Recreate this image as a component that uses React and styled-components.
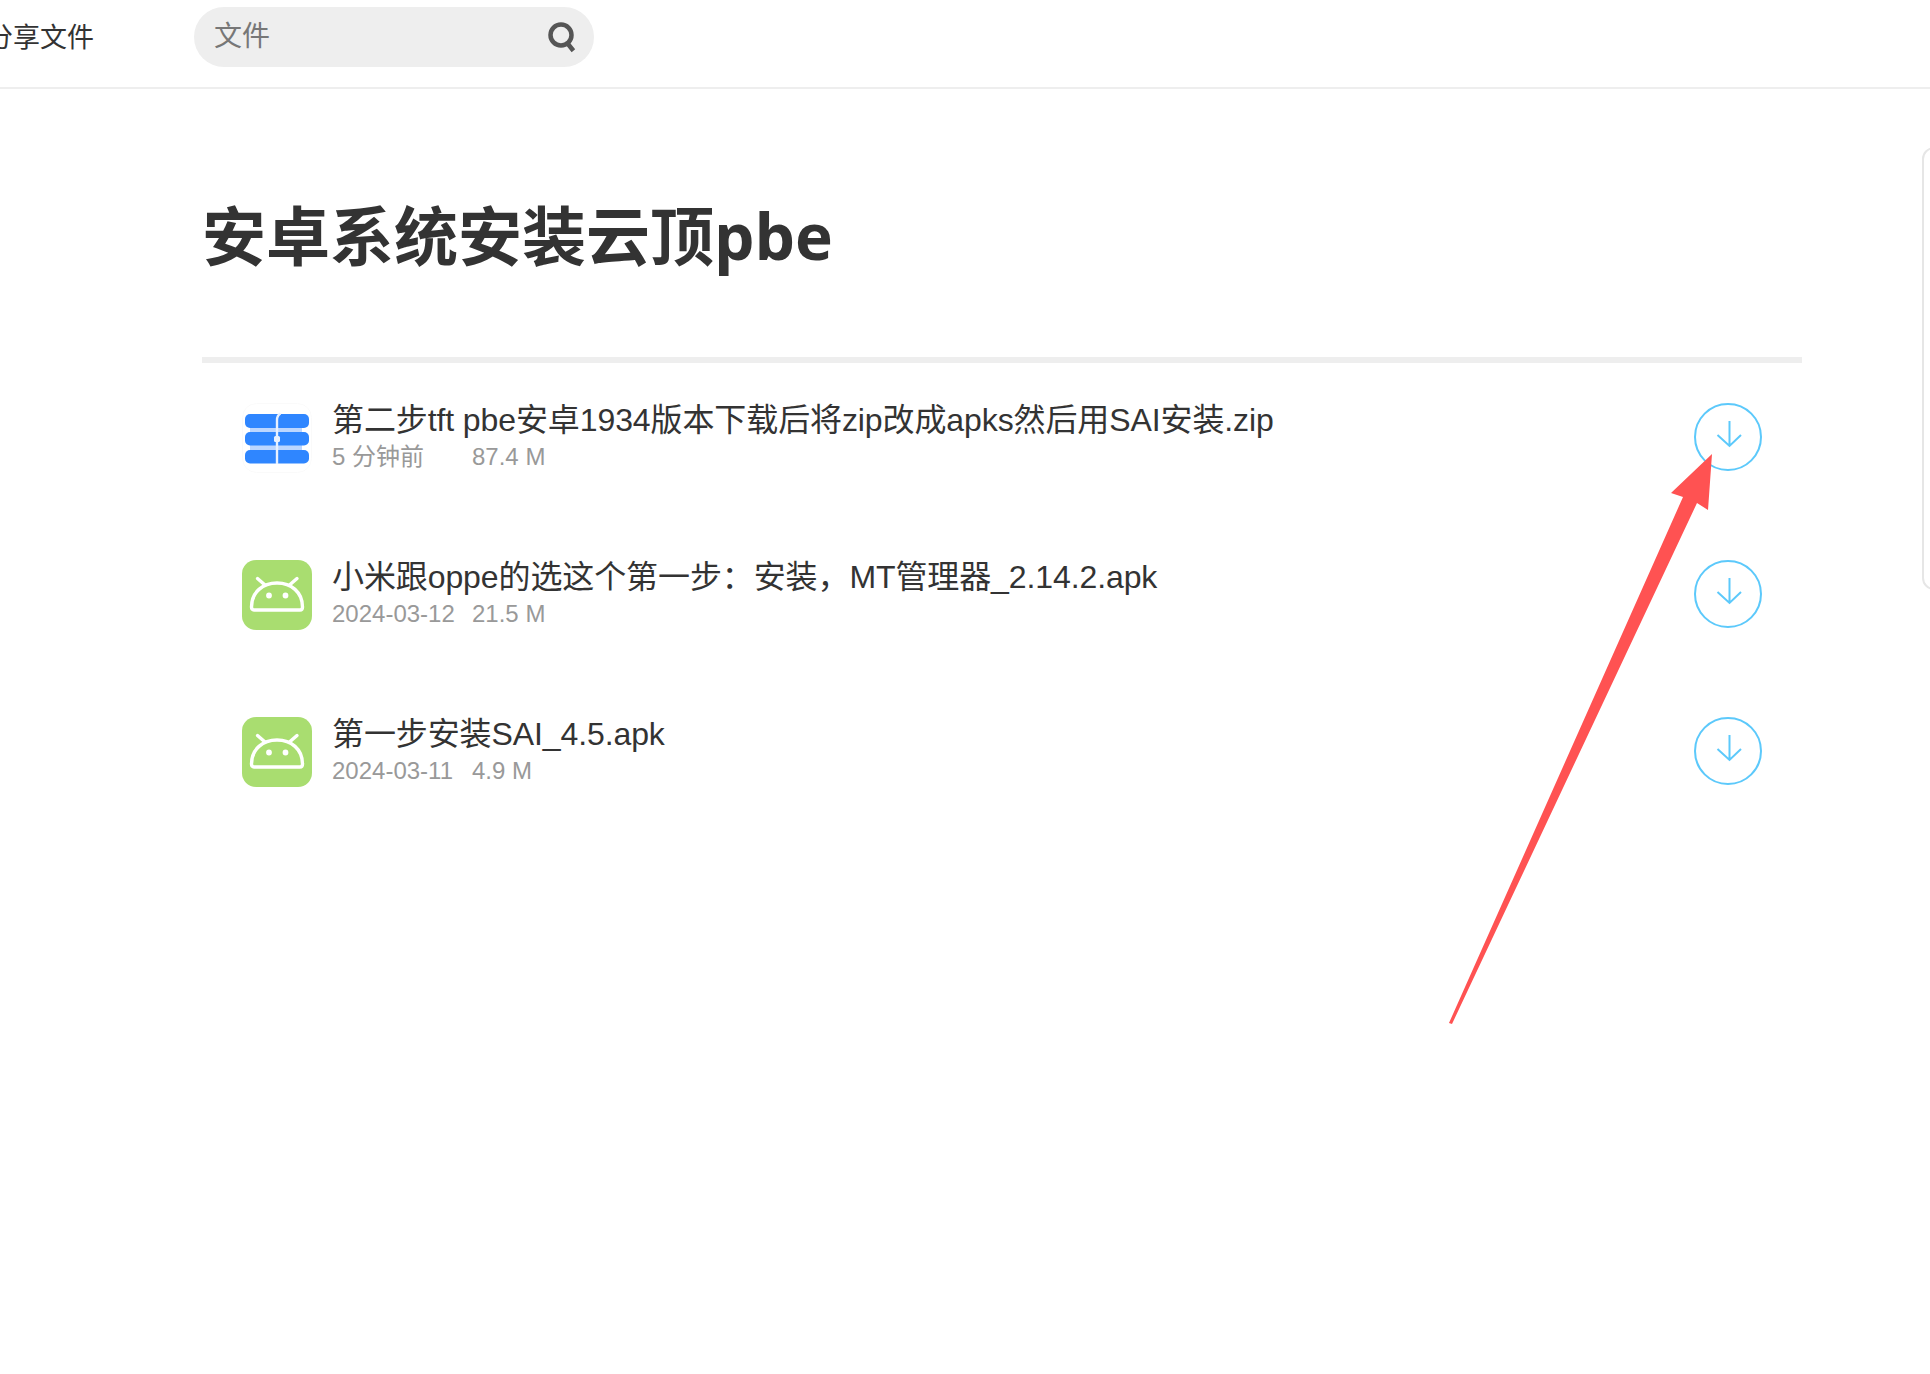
import React from "react";
import styled, { createGlobalStyle } from "styled-components";

const Global = createGlobalStyle`
  html, body { margin: 0; padding: 0; background: #fff; }
  body { font-family: "Liberation Sans", "Noto Sans CJK SC", sans-serif; }
  * { box-sizing: border-box; }
`;

const Page = styled.div`
  position: relative;
  width: 1930px;
  height: 1374px;
  overflow: hidden;
  background: #fff;
`;

const TopBar = styled.header`
  display: flex;
  align-items: flex-start;
  height: 89px;
  padding-top: 7px;
  border-bottom: 2px solid #eeeeee;
`;

const NavLabel = styled.div`
  width: 194px;
  margin-left: -14px;
  padding-top: 12px;
  font-size: 27px;
  line-height: 38px;
  color: #333;
  white-space: nowrap;
`;

const SearchBox = styled.div`
  display: flex;
  align-items: center;
  justify-content: space-between;
  width: 400px;
  height: 60px;
  margin-left: 14px;
  padding: 0 16px 0 20px;
  border-radius: 30px;
  background: #eeeeee;
`;

const SearchText = styled.span`
  font-size: 28px;
  line-height: 56px;
  color: #777;
`;

const Main = styled.main`
  width: 1600px;
  margin-left: 202px;
`;

const Title = styled.h1`
  margin: 0;
  height: 274px;
  padding-top: 102px;
  border-bottom: 6px solid #eeeeee;
  font-family: "Open Sans", "Noto Sans CJK SC", sans-serif;
  font-size: 64px;
  line-height: 90px;
  font-weight: 700;
  color: #333;
`;

const FileList = styled.ul`
  list-style: none;
  margin: 0;
  padding: 10px 40px 0 40px;
  display: flex;
  flex-direction: column;
  gap: 30px;
`;

const Row = styled.li`
  display: flex;
  align-items: center;
  height: 127px;
`;

const IconBox = styled.div`
  width: 70px;
  height: 70px;
  flex: none;
  margin-top: 2px;
  border-radius: 14px;
  overflow: hidden;
  background: ${(p) => p.$bg};
`;

const Info = styled.div`
  flex: 1;
  margin-left: 20px;
  padding-top: 2px;
`;

const FileName = styled.div`
  font-size: 32px;
  line-height: 38px;
  letter-spacing: -0.1px;
  color: #333;
  white-space: nowrap;
`;

const Meta = styled.div`
  display: flex;
  padding-top: 1px;
  font-size: 24px;
  line-height: 34px;
  color: #999;
`;

const MetaDate = styled.span`
  min-width: ${(p) => p.$w}px;
`;

const DownloadButton = styled.button`
  display: flex;
  align-items: center;
  justify-content: center;
  width: 68px;
  height: 68px;
  padding: 0 0 6px 2px;
  flex: none;
  border: 2px solid #5cc9fb;
  border-radius: 50%;
  background: transparent;
`;

const SidePanel = styled.div`
  position: absolute;
  left: 1922px;
  top: 147px;
  width: 40px;
  height: 443px;
  border: 2px solid #e6e6e6;
  border-radius: 12px;
`;

const ArrowOverlay = styled.svg`
  position: absolute;
  left: 0;
  top: 0;
  pointer-events: none;
`;

const ZipIcon = () => (
  <svg width="70" height="70" viewBox="0 0 70 70">
    <rect x="0.5" y="0.5" width="69" height="69" rx="14" fill="#fff" stroke="#fafafa" />
    <rect x="8" y="24" width="52" height="6" fill="#bcd6ff" />
    <rect x="8" y="41" width="52" height="7" fill="#bcd6ff" />
    <rect x="3" y="11" width="64" height="14" rx="5" fill="#2f86ff" />
    <rect x="3" y="29" width="64" height="13.5" rx="5" fill="#2f86ff" />
    <rect x="3" y="47" width="64" height="13.5" rx="5" fill="#2f86ff" />
    <path d="M38.5 10.5 Q35 12.5 35 17 V61" stroke="#e8f1ff" strokeWidth="2.4" fill="none" />
    <rect x="32" y="33" width="6" height="6" rx="1.5" fill="#e8f1ff" />
  </svg>
);

const AndroidIcon = () => (
  <svg width="70" height="70" viewBox="0 0 70 70" fill="none" stroke="#fff" strokeWidth="3.4" strokeLinecap="round" strokeLinejoin="round">
    <path d="M9.5 47 C9.5 32 21 23 35 23 C49 23 60.5 32 60.5 47 Q60.5 50 58 50 H12 Q9.5 50 9.5 47 Z" />
    <path d="M15.5 18.5 L23 25 M55 18.5 L47.5 25" />
    <circle cx="27" cy="35.5" r="1.2" fill="#fff" />
    <circle cx="43.5" cy="35.5" r="1.2" fill="#fff" />
  </svg>
);

const SearchGlyph = () => (
  <svg width="32" height="34" viewBox="0 0 32 34" fill="none" stroke="#555" strokeWidth="4.5" strokeLinecap="square">
    <circle cx="15" cy="15" r="10.5" />
    <path d="M22 24 L26 29" />
  </svg>
);

const DownArrow = () => (
  <svg width="26" height="28" viewBox="0 0 26 28" fill="none" stroke="#5cc9fb" strokeWidth="2">
    <path d="M13.5 1 V26 M1.5 15 L13.5 26 L25 15" />
  </svg>
);

const files = [
  { name: "第二步tft pbe安卓1934版本下载后将zip改成apks然后用SAI安装.zip", date: "5 分钟前", size: "87.4 M", kind: "zip" },
  { name: "小米跟oppe的选这个第一步：安装，MT管理器_2.14.2.apk", date: "2024-03-12", size: "21.5 M", kind: "apk" },
  { name: "第一步安装SAI_4.5.apk", date: "2024-03-11", size: "4.9 M", kind: "apk" },
];

export default function App() {
  return (
    <Page>
      <Global />
      <TopBar>
        <NavLabel>分享文件</NavLabel>
        <SearchBox>
          <SearchText>文件</SearchText>
          <SearchGlyph />
        </SearchBox>
      </TopBar>
      <Main>
        <Title>安卓系统安装云顶pbe</Title>
        <FileList>
          {files.map((f) => (
            <Row key={f.name}>
              <IconBox $bg={f.kind === "zip" ? "#fff" : "#a9dd70"}>
                {f.kind === "zip" ? <ZipIcon /> : <AndroidIcon />}
              </IconBox>
              <Info>
                <FileName>{f.name}</FileName>
                <Meta>
                  <MetaDate $w={140}>{f.date}</MetaDate>
                  <span>{f.size}</span>
                </Meta>
              </Info>
              <DownloadButton aria-label="下载">
                <DownArrow />
              </DownloadButton>
            </Row>
          ))}
        </FileList>
      </Main>
      <SidePanel />
      <ArrowOverlay width="1930" height="1374" viewBox="0 0 1930 1374">
        <polygon points="1712,454 1708,510 1697,503 1452,1024 1449,1023 1683,497 1671,493" fill="#ff5252" />
      </ArrowOverlay>
    </Page>
  );
}
